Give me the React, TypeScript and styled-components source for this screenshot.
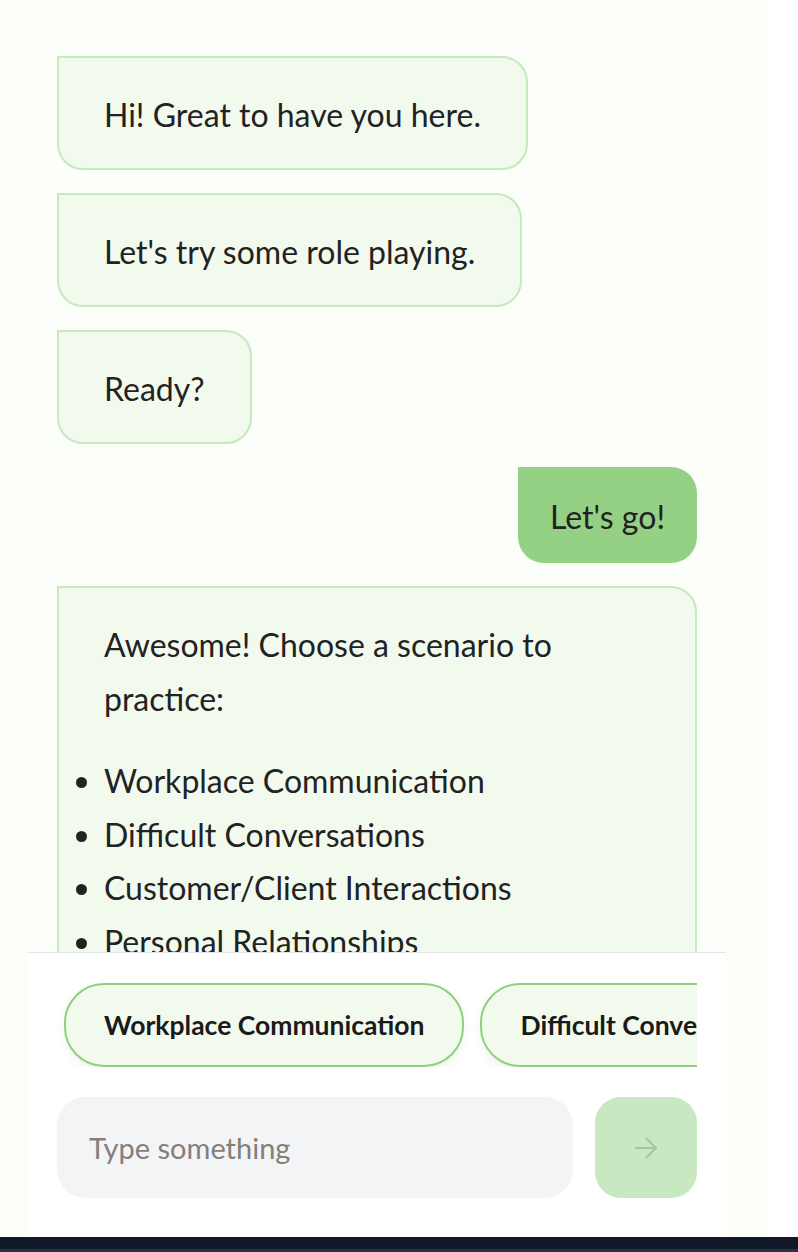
import React from "react";
import styled, { createGlobalStyle } from "styled-components";
import { ArrowRight } from "lucide-react";

const GlobalStyle = createGlobalStyle`
  html, body { margin: 0; padding: 0; background: #ffffff; }
  body { font-family: "Lato", "Noto Sans", sans-serif; color: #222222; }
  * { box-sizing: border-box; }
`;

const Page = styled.div`
  width: 798px;
  height: 1252px;
  display: flex;
  flex-direction: column;
  overflow: hidden;
`;

const Main = styled.div`
  height: 1237px;
  display: flex;
`;

const ChatApp = styled.div`
  width: 768px;
  height: 100%;
  background: #fcfef9;
  display: flex;
  flex-direction: column;
`;

const Messages = styled.div`
  flex: 1;
  min-height: 0;
  overflow: hidden;
  padding: 56px 71px 0 57px;
  display: flex;
  flex-direction: column;
  gap: 23px;
`;

const BotBubble = styled.div<{ $wide?: boolean }>`
  align-self: ${(p) => (p.$wide ? "stretch" : "flex-start")};
  flex-shrink: 0;
  background: #f2faee;
  border: 2px solid #c6e9be;
  border-radius: 0 26px 26px 26px;
  padding: 30px 45px 26px;
  font-size: 32px;
  line-height: 54px;
  color: #222222;
`;

const UserBubble = styled.div`
  align-self: flex-end;
  flex-shrink: 0;
  background: #95d185;
  border-radius: 0 26px 26px 26px;
  padding: 23px 32px 19px;
  font-size: 32px;
  line-height: 54px;
  color: #222222;
`;

const Para = styled.p`
  margin: 0;
`;

const List = styled.ul`
  margin: 28px 0 0 -45px;
  padding: 0 0 0 45px;
  line-height: 53.5px;
`;

const Panel = styled.div`
  margin-left: 27px;
  width: 699px;
  height: 285px;
  background: #ffffff;
  border-top: 1px solid #e5e7eb;
  padding: 30px 29px 30px 30px;
  display: flex;
  flex-direction: column;
  gap: 30px;
  flex-shrink: 0;
`;

const ChipRow = styled.div`
  display: flex;
  gap: 16px;
  overflow: hidden;
  padding: 0 0 0 7px;
`;

const Chip = styled.button`
  flex-shrink: 0;
  height: 84px;
  padding: 0 38px;
  border: 2px solid #8fd07e;
  border-radius: 40px;
  background: #f2faee;
  box-shadow: 0 4px 10px rgba(120, 160, 110, 0.12);
  font-family: "Lato", "Noto Sans", sans-serif;
  font-weight: 700;
  font-size: 26.5px;
  color: #1a1a1a;
  white-space: nowrap;
`;

const InputRow = styled.div`
  display: flex;
  gap: 22px;
  height: 101px;
`;

const TextInput = styled.input`
  flex: 1;
  min-width: 0;
  height: 100%;
  border: none;
  outline: none;
  background: #f3f4f6;
  border-radius: 28px;
  padding: 0 32px;
  font-family: "Lato", "Noto Sans", sans-serif;
  font-size: 29px;
  color: #222222;
  &::placeholder { color: #857f7a; }
`;

const SendButton = styled.button`
  width: 102px;
  height: 100%;
  border: none;
  border-radius: 26px;
  background: #c7e8c0;
  display: flex;
  align-items: center;
  justify-content: center;
  color: #a6c2a0;
`;

const Side = styled.div`
  flex: 1;
  background: #ffffff;
`;

const BottomBar = styled.div`
  height: 15px;
  background: #111827;
  border-bottom: 3px solid #2b3140;
`;

export default function App() {
  return (
    <>
      <GlobalStyle />
      <Page>
        <Main>
          <ChatApp>
            <Messages>
              <BotBubble>Hi! Great to have you here.</BotBubble>
              <BotBubble>Let's try some role playing.</BotBubble>
              <BotBubble>Ready?</BotBubble>
              <UserBubble>Let's go!</UserBubble>
              <BotBubble $wide>
                <Para>Awesome! Choose a scenario to practice:</Para>
                <List>
                  <li>Workplace Communication</li>
                  <li>Difficult Conversations</li>
                  <li>Customer/Client Interactions</li>
                  <li>Personal Relationships</li>
                </List>
              </BotBubble>
            </Messages>
            <Panel>
              <ChipRow>
                <Chip>Workplace Communication</Chip>
                <Chip>Difficult Conversations</Chip>
                <Chip>Customer/Client Interactions</Chip>
              </ChipRow>
              <InputRow>
                <TextInput placeholder="Type something" />
                <SendButton aria-label="Send">
                  <ArrowRight size={34} strokeWidth={1.4} />
                </SendButton>
              </InputRow>
            </Panel>
          </ChatApp>
          <Side />
        </Main>
        <BottomBar />
      </Page>
    </>
  );
}
